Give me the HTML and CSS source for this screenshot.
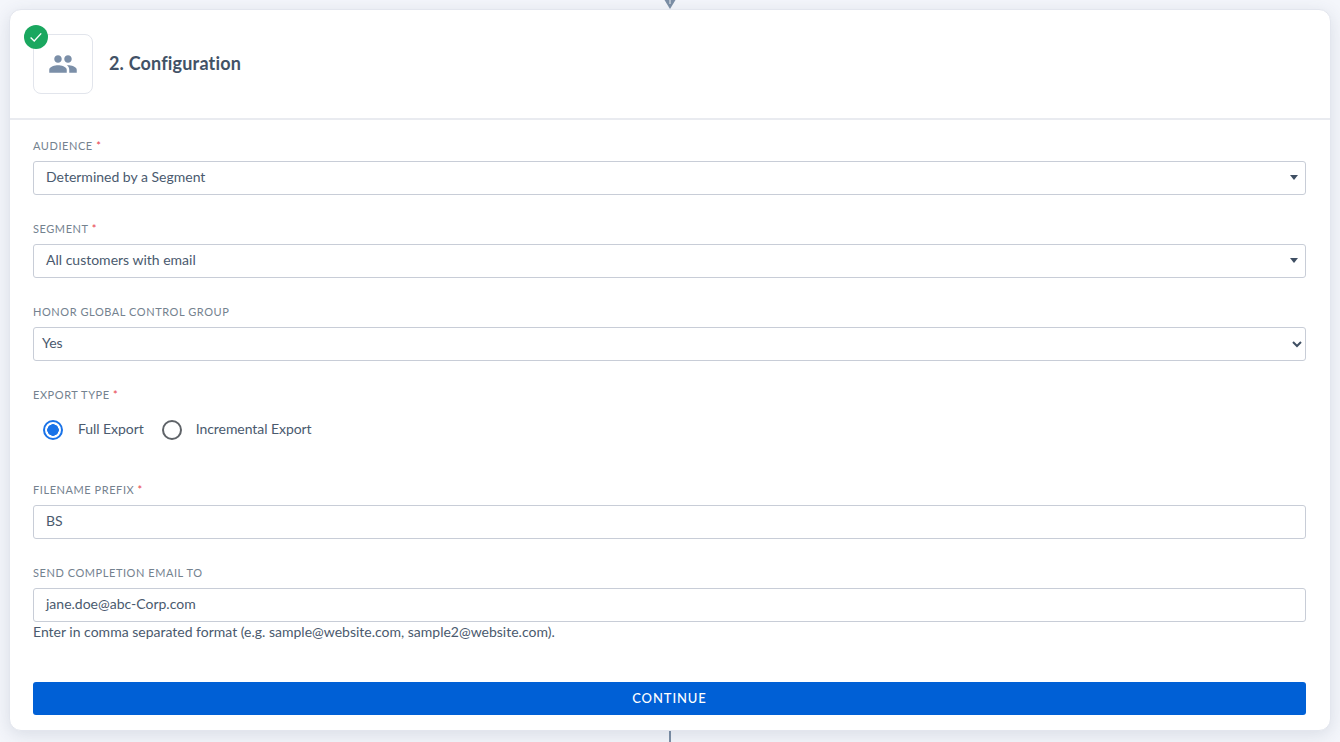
FILE: index.html
```html
<!DOCTYPE html>
<html lang="en">
<head>
<meta charset="utf-8">
<title>Configuration</title>
<link rel="stylesheet" href="styles.css">
</head>
<body>
<div class="connector-top">
  <svg width="12" height="9" viewBox="0 0 12 9"><path d="M0.5 0H11.5L6 9Z" fill="#7c8fa6"/><path d="M6 0V4" stroke="#eef1f6" stroke-width="1"/></svg>
</div>
<main class="card">
  <header class="card-head">
    <div class="icon-box">
      <span class="check">
        <svg width="16" height="16" viewBox="0 0 16 16"><path d="M2.6 8.6L6.2 12L13.2 4.4" fill="none" stroke="#fff" stroke-width="1.4"/></svg>
      </span>
      <svg width="30" height="30" viewBox="0 0 24 24"><path fill="#7b8fa8" d="M16 11c1.66 0 2.99-1.34 2.99-3S17.66 5 16 5c-1.66 0-3 1.34-3 3s1.34 3 3 3zm-8 0c1.66 0 2.99-1.34 2.99-3S9.66 5 8 5C6.34 5 5 6.34 5 8s1.34 3 3 3zm0 2c-2.33 0-7 1.17-7 3.5V19h14v-2.5c0-2.33-4.67-3.5-7-3.5zm8 0c-.29 0-.62.02-.97.05 1.16.84 1.97 1.97 1.97 3.45V19h6v-2.5c0-2.33-4.67-3.5-7-3.5z"/></svg>
    </div>
    <h1 class="title">2. Configuration</h1>
  </header>
  <form class="form">
    <div class="field">
      <div class="label">AUDIENCE <span class="req">*</span></div>
      <div class="control">Determined by a Segment<span class="caret"></span></div>
    </div>
    <div class="field">
      <div class="label">SEGMENT <span class="req">*</span></div>
      <div class="control">All customers with email<span class="caret"></span></div>
    </div>
    <div class="field">
      <div class="label">HONOR GLOBAL CONTROL GROUP</div>
      <div class="control native">Yes
        <svg class="chevron" width="10" height="7" viewBox="0 0 10 7"><path d="M1 1L5 5L9 1" fill="none" stroke="#3f4f63" stroke-width="2"/></svg>
      </div>
    </div>
    <div class="field field-radio">
      <div class="label">EXPORT TYPE <span class="req">*</span></div>
      <div class="radios">
        <span class="radio radio-on"></span><span class="radio-text">Full Export</span>
        <span class="radio"></span><span class="radio-text">Incremental Export</span>
      </div>
    </div>
    <div class="field">
      <div class="label">FILENAME PREFIX <span class="req">*</span></div>
      <div class="control">BS</div>
    </div>
    <div class="field field-email">
      <div class="label">SEND COMPLETION EMAIL TO</div>
      <div class="control">jane.doe@abc-Corp.com</div>
      <div class="hint">Enter in comma separated format (e.g. sample@website.com, sample2@website.com).</div>
    </div>
    <button type="button" class="continue">CONTINUE</button>
  </form>
</main>
<div class="connector-bottom"></div>
</body>
</html>
```

FILE: styles.css
```css
* { box-sizing: border-box; }
html, body { margin: 0; height: 742px; overflow: hidden; }
body {
  background: #f4f6fb;
  font-family: "Lato", "Liberation Sans", sans-serif;
  color: #4a5a6e;
  display: flex;
  flex-direction: column;
  align-items: center;
}
.connector-top { height: 9px; display: flex; justify-content: center; overflow: hidden; flex: none; }
.card {
  width: 1322px;
  height: 722px;
  flex: none;
  background: #fff;
  border: 1px solid #e3e6ee;
  border-radius: 12px;
  box-shadow: 0 4px 18px rgba(60, 70, 100, .14);
  position: relative;
}
.card-head {
  height: 110px;
  padding: 24px 23px 0;
  display: flex;
  align-items: flex-start;
  gap: 16px;
  border-bottom: 2px solid #e9ebf0;
}
.icon-box {
  width: 60px;
  height: 60px;
  border: 1px solid #e2e5ec;
  border-radius: 8px;
  display: flex;
  align-items: center;
  justify-content: center;
  position: relative;
}
.check {
  position: absolute;
  left: -10px;
  top: -10px;
  width: 24px;
  height: 24px;
  border-radius: 50%;
  background: #1aa75f;
  display: flex;
  align-items: center;
  justify-content: center;
}
.title { margin: 0; font-size: 18px; font-weight: 700; line-height: 58px; color: #425266; letter-spacing: .18px; }
.form { padding: 19px 24px 0 23px; display: flex; flex-direction: column; }
.field { height: 83px; flex: none; }
.field-radio { height: 95px; }
.field-email { height: 116px; }
.label { font-size: 11px; line-height: 14px; height: 22px; letter-spacing: .56px; color: #74828f; }
.req { color: #e8404a; }
.control {
  height: 34px;
  border: 1px solid #c8cdd7;
  border-radius: 3px;
  padding: 0 12px;
  font-size: 14px;
  line-height: 30px;
  position: relative;
  background: #fff;
}
.native { padding: 0 8px; }
.caret {
  position: absolute;
  right: 7px;
  top: 13px;
  border-left: 4.5px solid transparent;
  border-right: 4.5px solid transparent;
  border-top: 5px solid #3f4f63;
}
.chevron { position: absolute; right: 3px; top: 13px; }
.radios { display: flex; align-items: center; height: 40px; padding-left: 10px; font-size: 14px; letter-spacing: -.06px; }
.radio {
  width: 20px;
  height: 20px;
  border-radius: 50%;
  border: 2px solid #5f6368;
  margin-right: 14px;
  flex: none;
}
.radio:first-child { margin-right: 15px; }
.radio-on { border-color: #1a73e8; background: radial-gradient(circle, #1a73e8 0 5.5px, #fff 6px); }
.radio-text { margin-right: 18px; position: relative; top: -2px; }
.hint { font-size: 14px; line-height: 20px; color: #4a5a6e; }
.continue {
  height: 33px;
  border: 0;
  border-radius: 3px;
  padding: 0 0 2px;
  background: #0060d6;
  color: #fff;
  font-family: inherit;
  font-size: 13px;
  letter-spacing: .9px;
  font-weight: 500;
}
.connector-bottom { width: 2px; height: 11px; background: #7c8fa6; flex: none; }
```
